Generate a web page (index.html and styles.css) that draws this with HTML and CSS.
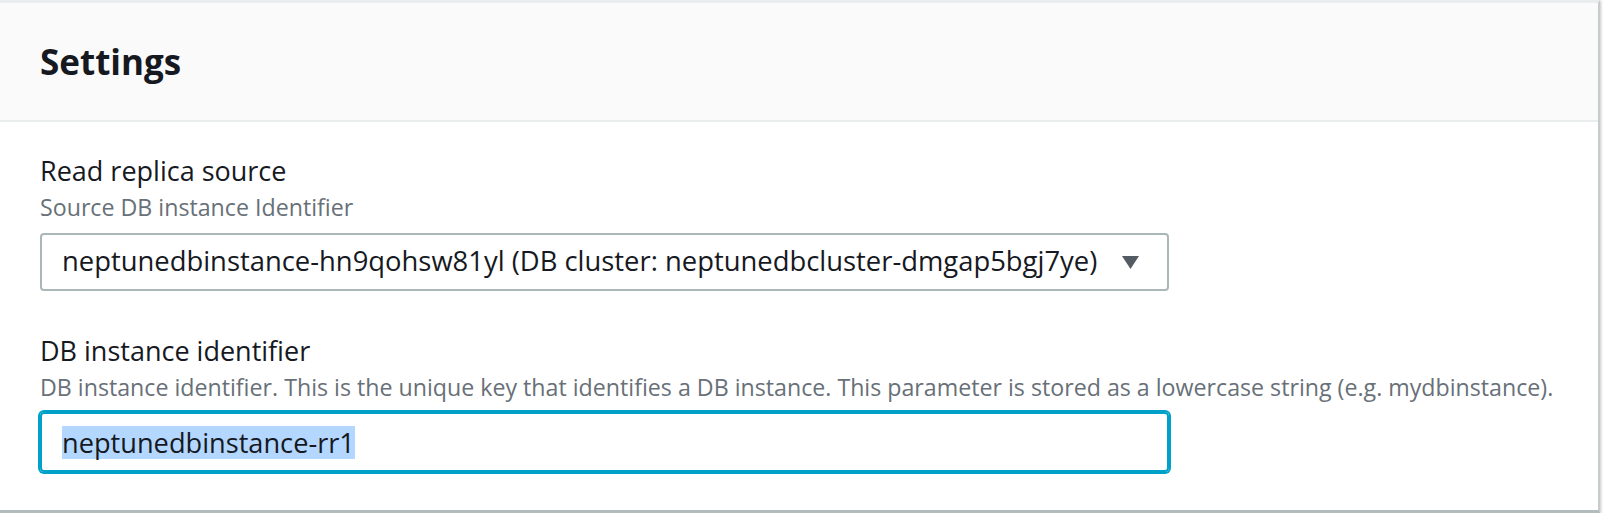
FILE: index.html
```html
<!DOCTYPE html>
<html>
<head>
<meta charset="utf-8">
<link rel="stylesheet" href="styles.css">
</head>
<body>
<div class="card">
  <div class="card-header">
    <h2 class="card-title">Settings</h2>
  </div>
  <div class="card-body">
    <div class="field">
      <div class="label">Read replica source</div>
      <div class="desc">Source DB instance Identifier</div>
      <div class="select">
        <span class="select-value">neptunedbinstance-hn9qohsw81yl (DB cluster: neptunedbcluster-dmgap5bgj7ye)</span>
        <svg class="caret" width="17" height="13" viewBox="0 0 17 13"><path d="M0 0 H17 L8.5 13 Z" fill="#545b64"/></svg>
      </div>
    </div>
    <div class="field field-second">
      <div class="label">DB instance identifier</div>
      <div class="desc">DB instance identifier. This is the unique key that identifies a DB instance. This parameter is stored as a lowercase string (e.g. mydbinstance).</div>
      <div class="input input-focused">
        <span class="selected-text">neptunedbinstance-rr1</span>
      </div>
    </div>
  </div>
</div>
</body>
</html>
```

FILE: styles.css
```css
html, body {
  margin: 0;
  padding: 0;
  background: #ffffff;
}
body {
  font-family: "Open Sans", "Noto Sans", sans-serif;
  color: #16191f;
}
.card {
  width: 1600px;
  box-sizing: border-box;
  background: #ffffff;
  border-top: 3px solid #eaeded;
  border-right: 2px solid #c6cccd;
  border-bottom: 3px solid #b3bcbd;
  box-shadow: 0 2px 2px 0 rgba(0, 28, 36, 0.2), 2px 0 2px 0 rgba(0, 28, 36, 0.1);
}
.card-header {
  background: #fafafa;
  border-bottom: 2px solid #eaeded;
  padding: 37px 40px 36px 40px;
}
.card-title {
  margin: 0;
  font-size: 35px;
  line-height: 44px;
  font-weight: 700;
}
.card-body {
  padding: 29px 40px 38px 40px;
}
.label {
  font-size: 27px;
  line-height: 40px;
}
.desc {
  font-size: 23.2px;
  line-height: 32px;
  color: #687078;
  white-space: nowrap;
}
.select {
  margin-top: 10px;
  width: 1129px;
  box-sizing: border-box;
  border: 2px solid #aab7b8;
  border-radius: 4px;
  padding: 6px 28px 8px 20px;
  display: flex;
  align-items: center;
  justify-content: space-between;
}
.select-value {
  font-size: 27.4px;
  line-height: 40px;
}
.caret {
  display: block;
  margin-top: 2px;
}
.field-second {
  margin-top: 40px;
}
.input {
  margin-top: 9px;
  width: 1129px;
  height: 60px;
  box-sizing: border-box;
  border: 2px solid #aab7b8;
  border-radius: 4px;
  padding: 0 20px;
  display: flex;
  align-items: center;
}
.input-focused {
  border-color: #00a1c9;
  box-shadow: 0 0 0 2px #00a1c9;
}
.selected-text {
  display: inline-block;
  font-size: 27.2px;
  height: 33px;
  line-height: 33px;
  background: #b3d7fe;
}
```
